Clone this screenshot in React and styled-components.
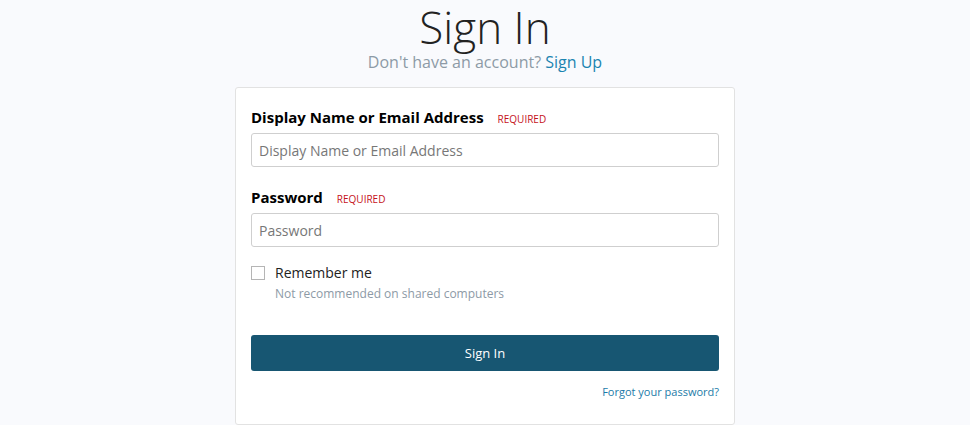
import React from "react";
import styled, { createGlobalStyle } from "styled-components";

const Global = createGlobalStyle`
  html, body { margin: 0; padding: 0; background: #f9fafd; }
  body { font-family: "Open Sans", "Liberation Sans", sans-serif; }
  * { box-sizing: border-box; }
`;

const Page = styled.div`
  display: flex;
  flex-direction: column;
  align-items: center;
  min-height: 425px;
`;

const Title = styled.h1`
  margin: 3px 0 0;
  font-size: 44px;
  font-weight: 300;
  line-height: 48px;
  color: #222;
`;

const Subtitle = styled.p`
  margin: 0;
  font-size: 16px;
  line-height: 22px;
  color: #8d9aa6;
`;

const Link = styled.a`
  color: ${(p) => p.$color || "#1b84b1"};
  text-decoration: none;
`;

const Card = styled.form`
  width: 500px;
  margin-top: 14px;
  background: #fff;
  border: 1px solid #e2e2e2;
  border-radius: 3px;
  padding: 19px 15px 24px;
  display: flex;
  flex-direction: column;
`;

const Field = styled.div`
  display: flex;
  flex-direction: column;
  gap: 6px;
  margin-bottom: ${(p) => p.$mb || 0}px;
`;

const LabelRow = styled.div`
  display: flex;
  align-items: baseline;
  gap: 14px;
`;

const Label = styled.label`
  font-size: 15px;
  font-weight: 700;
  line-height: 20px;
  color: #000;
`;

const Required = styled.span`
  font-size: 10px;
  text-transform: uppercase;
  color: #c5121a;
`;

const Input = styled.input`
  height: 34px;
  width: 100%;
  border: 1px solid #cfcfcf;
  border-radius: 3px;
  padding: 0 7px;
  font-family: inherit;
  font-size: 14px;
  color: #222;
  background: #fff;
  &::placeholder { color: #777; }
`;

const CheckRow = styled.label`
  display: flex;
  align-items: center;
  gap: 10px;
  font-size: 14px;
  line-height: 20px;
  color: #222;
`;

const Box = styled.span`
  width: 14px;
  height: 14px;
  border: 1px solid #b5b5b5;
  background: #fff;
`;

const Hint = styled.div`
  margin: 3px 0 0 24px;
  font-size: 12px;
  line-height: 16px;
  color: #8d9aa6;
`;

const Button = styled.button`
  margin-top: 33px;
  height: 36px;
  width: 100%;
  border: none;
  border-radius: 3px;
  background: #175672;
  color: #fff;
  font-family: inherit;
  font-size: 13px;
`;

const Forgot = styled.div`
  margin-top: 13px;
  text-align: right;
  font-size: 11px;
  line-height: 16px;
`;

export default function App() {
  return (
    <Page>
      <Global />
      <Title>Sign In</Title>
      <Subtitle>
        Don't have an account? <Link href="#">Sign Up</Link>
      </Subtitle>
      <Card onSubmit={(e) => e.preventDefault()}>
        <Field $mb={20}>
          <LabelRow>
            <Label>Display Name or Email Address</Label>
            <Required>Required</Required>
          </LabelRow>
          <Input placeholder="Display Name or Email Address" />
        </Field>
        <Field $mb={16}>
          <LabelRow>
            <Label>Password</Label>
            <Required>Required</Required>
          </LabelRow>
          <Input type="password" placeholder="Password" />
        </Field>
        <CheckRow>
          <Box />
          Remember me
        </CheckRow>
        <Hint>Not recommended on shared computers</Hint>
        <Button type="submit">Sign In</Button>
        <Forgot>
          <Link href="#" $color="#1b7ba8">Forgot your password?</Link>
        </Forgot>
      </Card>
    </Page>
  );
}
